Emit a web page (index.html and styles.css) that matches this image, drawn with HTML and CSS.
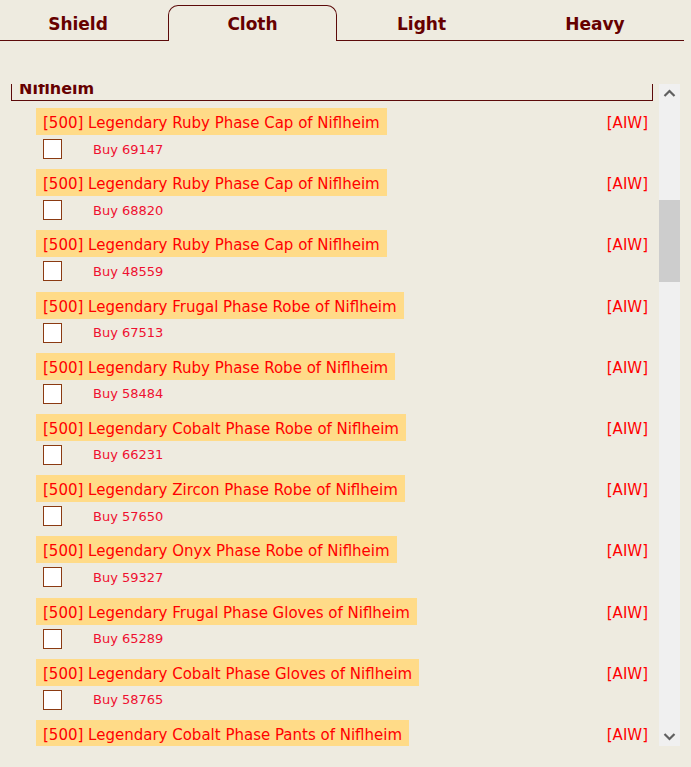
FILE: index.html
```html
<!DOCTYPE html>
<html lang="en">
<head>
  <meta charset="UTF-8" />
  <title>Loot - Cloth</title>
  <link rel="stylesheet" href="styles.css">
</head>
<body>
  <!-- Armour type tabs -->
  <div class="tabs">
    <div class="tab tab-first">Shield</div>
    <div class="tab active">Cloth</div>
    <div class="tab">Light</div>
    <div class="tab tab-last">Heavy</div>
  </div>

  <!-- Item list -->
  <div class="panel">
    <div class="list" id="item-list">
      <div class="group-title">Niflheim</div>

      <div class="item">
        <div class="item-head"><span class="item-name">[500] Legendary Ruby Phase Cap of Niflheim</span><span class="item-tag">[AIW]</span></div>
        <div class="item-buy"><input type="checkbox" class="buy-check"><span class="buy-text">Buy 69147</span></div>
      </div>
      <div class="item">
        <div class="item-head"><span class="item-name">[500] Legendary Ruby Phase Cap of Niflheim</span><span class="item-tag">[AIW]</span></div>
        <div class="item-buy"><input type="checkbox" class="buy-check"><span class="buy-text">Buy 68820</span></div>
      </div>
      <div class="item">
        <div class="item-head"><span class="item-name">[500] Legendary Ruby Phase Cap of Niflheim</span><span class="item-tag">[AIW]</span></div>
        <div class="item-buy"><input type="checkbox" class="buy-check"><span class="buy-text">Buy 48559</span></div>
      </div>
      <div class="item">
        <div class="item-head"><span class="item-name">[500] Legendary Frugal Phase Robe of Niflheim</span><span class="item-tag">[AIW]</span></div>
        <div class="item-buy"><input type="checkbox" class="buy-check"><span class="buy-text">Buy 67513</span></div>
      </div>
      <div class="item">
        <div class="item-head"><span class="item-name">[500] Legendary Ruby Phase Robe of Niflheim</span><span class="item-tag">[AIW]</span></div>
        <div class="item-buy"><input type="checkbox" class="buy-check"><span class="buy-text">Buy 58484</span></div>
      </div>
      <div class="item">
        <div class="item-head"><span class="item-name">[500] Legendary Cobalt Phase Robe of Niflheim</span><span class="item-tag">[AIW]</span></div>
        <div class="item-buy"><input type="checkbox" class="buy-check"><span class="buy-text">Buy 66231</span></div>
      </div>
      <div class="item">
        <div class="item-head"><span class="item-name">[500] Legendary Zircon Phase Robe of Niflheim</span><span class="item-tag">[AIW]</span></div>
        <div class="item-buy"><input type="checkbox" class="buy-check"><span class="buy-text">Buy 57650</span></div>
      </div>
      <div class="item">
        <div class="item-head"><span class="item-name">[500] Legendary Onyx Phase Robe of Niflheim</span><span class="item-tag">[AIW]</span></div>
        <div class="item-buy"><input type="checkbox" class="buy-check"><span class="buy-text">Buy 59327</span></div>
      </div>
      <div class="item">
        <div class="item-head"><span class="item-name">[500] Legendary Frugal Phase Gloves of Niflheim</span><span class="item-tag">[AIW]</span></div>
        <div class="item-buy"><input type="checkbox" class="buy-check"><span class="buy-text">Buy 65289</span></div>
      </div>
      <div class="item">
        <div class="item-head"><span class="item-name">[500] Legendary Cobalt Phase Gloves of Niflheim</span><span class="item-tag">[AIW]</span></div>
        <div class="item-buy"><input type="checkbox" class="buy-check"><span class="buy-text">Buy 58765</span></div>
      </div>
      <div class="item">
        <div class="item-head"><span class="item-name">[500] Legendary Cobalt Phase Pants of Niflheim</span><span class="item-tag">[AIW]</span></div>
      </div>
    </div>

    <div class="scrollbar">
      <div class="sb-button">
        <svg width="21" height="17" viewBox="0 0 21 17"><path d="M5.5 12 L10.5 7 L15.5 12" fill="none" stroke="#606060" stroke-width="2.2"/></svg>
      </div>
      <div class="sb-track">
        <div class="sb-thumb"></div>
      </div>
      <div class="sb-button">
        <svg width="21" height="17" viewBox="0 0 21 17"><path d="M5.5 5 L10.5 10 L15.5 5" fill="none" stroke="#606060" stroke-width="2.2"/></svg>
      </div>
    </div>
  </div>

  <script>
    // list is shown scrolled a little past the group header
    document.getElementById('item-list').scrollTop = 16;
  </script>
</body>
</html>
```

FILE: styles.css
```css
:root {
  --bg-color: #eeebe0;
  --maroon: #600;
  --line-color: #5c0a0a;
  --item-bg: #ffdb88;
  --item-red: #ff0000;
  --buy-red: #ee1030;
}

* {
  box-sizing: border-box;
}

html, body {
  margin: 0;
  padding: 0;
  background-color: var(--bg-color);
  font-family: 'DejaVu Sans', sans-serif;
}

/* tabs */

.tabs {
  display: flex;
  align-items: flex-end;
  width: 684px;
  padding-top: 5px;
  border-bottom: 1px solid var(--line-color);
}

.tab {
  width: 169px;
  height: 36px;
  margin-bottom: -1px;
  padding-top: 1px;
  border: 1px solid transparent;
  border-bottom: none;
  border-radius: 10px 10px 0 0;
  text-align: center;
  font-size: 17px;
  font-weight: bold;
  line-height: 34px;
  color: var(--maroon);
}

.tab-first {
  width: 156px;
  margin-right: 12px;
}

.tab-last {
  flex: 1;
}

.tab.active {
  border-color: var(--line-color);
  background-color: var(--bg-color);
}

/* list panel */

.panel {
  display: flex;
  width: 680px;
  height: 662px;
  margin-top: 43px;
}

.list {
  flex: 1;
  overflow: hidden;
}

.group-title {
  margin: 8px 6px 7px 11px;
  padding: 2px 7px 1px;
  border: 1px solid var(--line-color);
  font-size: 16px;
  font-weight: bold;
  line-height: 20px;
  color: var(--maroon);
}

.item {
  margin: 0 11px 0 36px;
  padding-bottom: 10.2px;
}

.item-head {
  display: flex;
  justify-content: space-between;
  font-size: 15px;
  color: var(--item-red);
}

.item-name {
  height: 27px;
  padding: 3px 7px 0;
  line-height: 24px;
  background-color: var(--item-bg);
}

.item-tag {
  padding-top: 3px;
  line-height: 24px;
}

.item-buy {
  display: flex;
  align-items: flex-start;
  height: 20px;
  margin-top: 4px;
  padding-left: 7px;
}

.buy-check {
  appearance: none;
  width: 19px;
  height: 20px;
  margin: 0;
  border: 1px solid #8b3a12;
  background-color: #fff;
}

.buy-text {
  margin: 0.5px 0 0 31px;
  font-size: 13px;
  line-height: 20px;
  color: var(--buy-red);
}

/* scrollbar */

.scrollbar {
  display: flex;
  flex-direction: column;
  width: 21px;
  background-color: #f0f0f0;
}

.sb-button {
  height: 17px;
}

.sb-button svg {
  display: block;
}

.sb-track {
  flex: 1;
}

.sb-thumb {
  height: 82px;
  margin-top: 99px;
  background-color: #cdcdcd;
}
```
